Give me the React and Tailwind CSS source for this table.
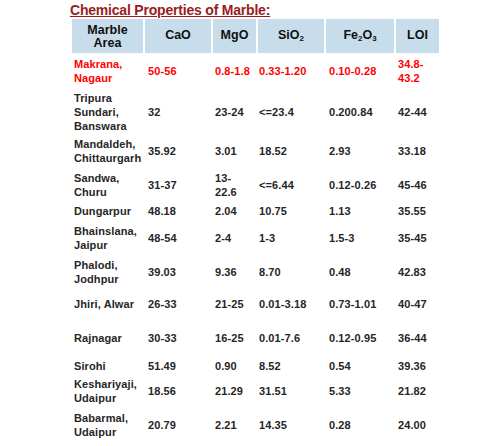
import React from 'react';

const cols = ['w-[71px] pl-[2px]', 'w-[66px] pl-[3px]', 'w-[43px] pl-[2px]', 'w-[66px] pl-[1px]', 'w-[68px] pl-[3px]', 'w-[43px] pl-[2px]'];

const rows = [
  { h: 'h-[36px]', red: true, cells: [['Makrana,', 'Nagaur'], '50-56', '0.8-1.8', '0.33-1.20', '0.10-0.28', ['34.8-', '43.2']] },
  { h: 'h-[46px]', cells: [['Tripura', 'Sundari,', 'Banswara'], '32', '23-24', '<=23.4', '0.200.84', '42-44'] },
  { h: 'h-[32px]', cells: [['Mandaldeh,', 'Chittaurgarh'], '35.92', '3.01', '18.52', '2.93', '33.18'] },
  { h: 'h-[36px]', cells: [['Sandwa,', 'Churu'], '31-37', ['13-', '22.6'], '<=6.44', '0.12-0.26', '45-46'] },
  { h: 'h-[16px]', cells: ['Dungarpur', '48.18', '2.04', '10.75', '1.13', '35.55'] },
  { h: 'h-[38px]', cells: [['Bhainslana,', 'Jaipur'], '48-54', '2-4', '1-3', '1.5-3', '35-45'] },
  { h: 'h-[30px]', cells: [['Phalodi,', 'Jodhpur'], '39.03', '9.36', '8.70', '0.48', '42.83'] },
  { h: 'h-[34px]', cells: ['Jhiri, Alwar', '26-33', '21-25', '0.01-3.18', '0.73-1.01', '40-47'] },
  { h: 'h-[34px]', cells: ['Rajnagar', '30-33', '16-25', '0.01-7.6', '0.12-0.95', '36-44'] },
  { h: 'h-[22px]', cells: ['Sirohi', '51.49', '0.90', '8.52', '0.54', '39.36'] },
  { h: 'h-[28px]', cells: [['Keshariyaji,', 'Udaipur'], '18.56', '21.29', '31.51', '5.33', '21.82'] },
  { h: 'h-[40px]', cells: [['Babarmal,', 'Udaipur'], '20.79', '2.21', '14.35', '0.28', '24.00'] },
];

const Cell = ({ value }) => {
  if (Array.isArray(value)) {
    return (
      <div>
        {value.map((line, i) => (
          <div key={i} className="whitespace-nowrap">{line}</div>
        ))}
      </div>
    );
  }
  return <div className="whitespace-nowrap">{value}</div>;
};

export default function App() {
  return (
    <div className="w-[500px] h-[446px] bg-white overflow-hidden" style={{ fontFamily: '"Liberation Sans", Arial, sans-serif' }}>
      <div className="pl-[70px] pt-[2px] h-[19px]">
        <h1 className="text-[14px] leading-[16px] font-bold text-[#9a1c1c] underline underline-offset-[1px] tracking-[-0.2px]">
          Chemical Properties of Marble:
        </h1>
      </div>

      <div className="ml-[72px]">
        {/* header */}
        <div className="flex gap-[2px] h-[34px] text-[12.5px] leading-[13.5px] font-bold text-[#111]">
          <div className="w-[71px] bg-[#c8ddec] flex flex-col items-center justify-center text-center pt-[2px]">
            <span>Marble</span>
            <span>Area</span>
          </div>
          <div className="w-[66px] bg-[#c8ddec] flex items-center justify-center">CaO</div>
          <div className="w-[43px] bg-[#c8ddec] flex items-center justify-center">MgO</div>
          <div className="w-[66px] bg-[#c8ddec] flex items-center justify-center">
            <span>SiO<sub className="text-[8px]">2</sub></span>
          </div>
          <div className="w-[68px] bg-[#c8ddec] flex items-center justify-center">
            <span>Fe<sub className="text-[8px]">2</sub>O<sub className="text-[8px]">3</sub></span>
          </div>
          <div className="w-[43px] bg-[#c8ddec] flex items-center justify-center">LOI</div>
        </div>

        {/* body */}
        {rows.map((row, r) => (
          <div
            key={r}
            className={`flex gap-[2px] ${row.h} text-[11px] leading-[14px] font-bold tracking-[0.1px] ${row.red ? 'text-[#ff0000]' : 'text-[#262626]'}`}
          >
            {row.cells.map((c, i) => (
              <div key={i} className={`${cols[i]} flex items-center`}>
                <Cell value={c} />
              </div>
            ))}
          </div>
        ))}
      </div>
    </div>
  );
}
